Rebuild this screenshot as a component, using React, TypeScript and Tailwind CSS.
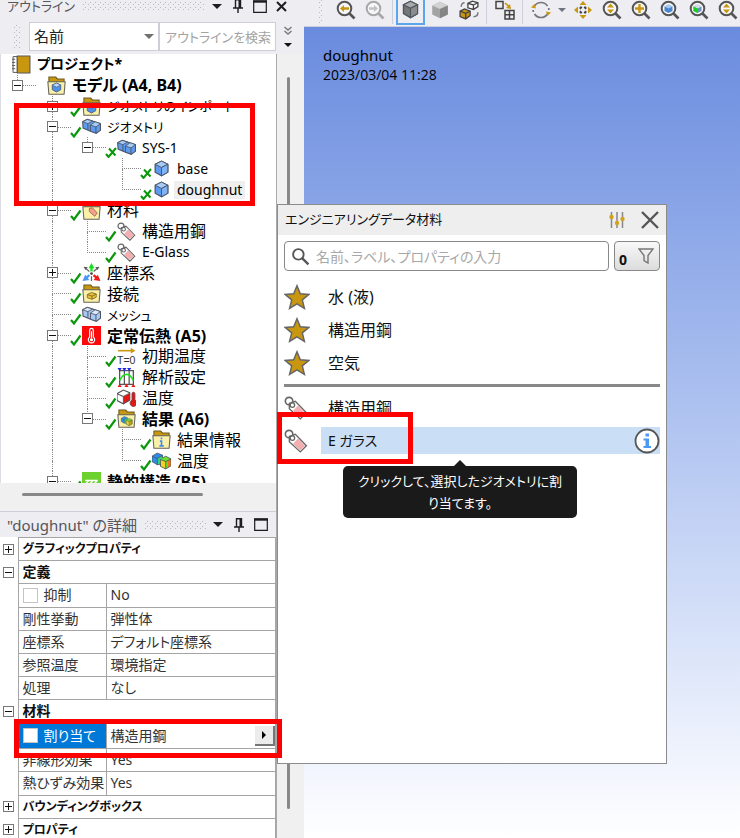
import React from 'react';
import clsx from 'clsx';

// guide cells in front of a tree row: one character for every level
//   ' ' empty   '|' line passing by   't' branch   'l' last branch
//   '-' open node   '+' closed node   '_' open node, last of its branch
interface TreeRow {
  guides: string
  icon: React.ReactNode
  label: string
  mark?: 'check' | 'cross'
  bold?: boolean
  script?: 'latin' | 'kana'
  selected?: boolean
}

interface DetailRow {
  name: string
  value?: string
  node?: '+' | '-'
  kana?: boolean
  checkbox?: boolean
  active?: boolean
}

const Svg: React.FC<{ size?: string, box?: string, children: React.ReactNode }> = ({ size = 'size-[19px]', box = '0 0 18 18', children }) => (
  <svg viewBox={box} className={clsx('shrink-0', size)} fill="none" aria-hidden="true">{children}</svg>
);

const BookIcon = () => (
  <Svg>
    <path d="M1 1.500h4v15H1z" fill="#fff" stroke="#555" strokeWidth=".9" />
    <path d="M5 1h12v16H5z" fill="#c8960f" stroke="#555" strokeWidth="1" />
    <path d="M0 4h3M0 7h3M0 10h3M0 13h3" stroke="#555" strokeWidth=".9" />
  </Svg>
);

const Folder: React.FC<{ children?: React.ReactNode }> = ({ children }) => (
  <Svg>
    <path d="M1.800 6V1h6.500l1.500 1.800h6.400V6z" fill="#c8960f" stroke="#6b5a24" strokeWidth="1" />
    <path d="M.8 5.500h16.400l-1 11.700H1.800z" fill="#fbf0a8" stroke="#66645a" strokeWidth="1" />
    {children}
  </Svg>
);

const SmallCube: React.FC<{ fill?: string }> = ({ fill = '#4f90e8' }) => (
  <>
    <path d="M9 6.600l4 2v4.400l-4 2.200-4-2.200V8.600z" fill={fill} stroke="#44597c" strokeWidth=".8" />
    <path d="M5 8.600l4 2 4-2-4-2z" fill="#b9d7fb" stroke="#44597c" strokeWidth=".6" />
  </>
);

const CubesIcon: React.FC<{ pale?: boolean }> = ({ pale }) => (
  <Svg>
    <path d="M.6 4.500L5 2.300l5 1.500 7.500 2.500v6.200l-4 3-5.500-2-7-3z" fill={pale ? '#a9c9f5' : '#5c9bf0'} stroke="#4c5564" strokeWidth="1" />
    <path d="M.6 4.500l5 1.800L10 3.800 5 2.300z" fill={pale ? '#dbe8fb' : '#a8ccf8'} stroke="#4c5564" strokeWidth=".8" />
    <path d="M8 7.600l5.200 1.800 4.300-3.100-5-1.800z" fill={pale ? '#dbe8fb' : '#a8ccf8'} stroke="#4c5564" strokeWidth=".8" />
    <path d="M5.600 6.300v6M8 7.600v5.800M13.200 9.400v6" stroke="#4c5564" strokeWidth=".9" />
  </Svg>
);

const CubeIcon: React.FC<{ fill?: string, top?: string, side?: string, size?: string }> = ({ fill = '#5c9bf0', top = '#a8ccf8', side = '#7fb3f6', size }) => (
  <Svg size={size}>
    <path d="M3 5l6-3 6 3v7.500L9 16l-6-3.500z" fill={fill} stroke="#4c5564" strokeWidth="1.200" />
    <path d="M3 5l6-3 6 3-6 3z" fill={top} stroke="#4c5564" strokeWidth=".9" />
    <path d="M9 8l6-3v7.500L9 16z" fill={side} stroke="#4c5564" strokeWidth=".9" />
  </Svg>
);

const TagIcon: React.FC<{ size?: string }> = ({ size }) => (
  <Svg size={size}>
    <path d="M4 5.500L8.500 4l8.300 8.500-4.600 4.700L4 9.500z" fill="#fff" stroke="#666" strokeWidth="1" />
    <path d="M10.500 7.200l5.200 5.300-3.600 3.600-5.300-5z" fill="#f4aeb0" />
    <circle cx="3.800" cy="3.800" r="2.800" stroke="#666" strokeWidth="1.200" />
    <circle cx="6.300" cy="6.800" r="1.700" fill="#fff" stroke="#666" strokeWidth="1" />
  </Svg>
);

const AxesIcon = () => (
  <Svg>
    <path d="M9 8V4" stroke="#19e019" strokeWidth="2.200" />
    <path d="M9 0l2.800 5H6.200z" fill="#19e019" />
    <path d="M11 11.500l3 2.500" stroke="#f01818" strokeWidth="2.200" />
    <path d="M17.500 17l-6.500-1 4-4.800z" fill="#f01818" />
    <path d="M7 11.500L4 14" stroke="#4c96f5" strokeWidth="2.200" />
    <path d="M.5 17l6.500-1-4-4.800z" fill="#4c96f5" />
    <path d="M7 8L4 5.500M11 8l3-2.500M9 12.500V17" stroke="#666" strokeWidth="1.200" />
    <path d="M1.500 3.500l4 .6-2.200 2.500zM16.500 3.500l-4 .6 2.200 2.500z" fill="#555" />
    <circle cx="9" cy="10" r="1.300" fill="#444" />
  </Svg>
);

const ThermalIcon = () => (
  <Svg>
    <path d="M0 0h18v18H0z" fill="#fa0a0a" />
    <path d="M7.300 10.500V4a1.700 1.700 0 013.400 0v6.500a3 3 0 11-3.400 0z" stroke="#fff" strokeWidth="1.100" />
    <path d="M9 5v7" stroke="#fff" strokeWidth="1" />
    <circle cx="9" cy="13" r="1.500" fill="#fff" />
  </Svg>
);

const InitialTempIcon = () => (
  <Svg>
    <path d="M1 3.500h13" stroke="#c8960f" strokeWidth="1.500" />
    <path d="M13 .8l4.500 2.700L13 6.200z" fill="#c8960f" />
    <text x="0" y="16.500" fontSize="10" fontFamily="Liberation Sans, sans-serif" fill="#333">T=0</text>
  </Svg>
);

const AnalysisIcon = () => (
  <Svg>
    <path d="M2.500 2.500h13v13h-13zM7 2.500v13M11.500 2.500v13" stroke="#555" strokeWidth="1.200" />
    <path d="M2.500 12C6 4 12 4 15.500 12" stroke="#1fe01f" strokeWidth="1.500" />
    <path d="M.5 0h4l-2 3zM5 0h4L7 3zM9.500 0h4l-2 3z" fill="#2222e8" />
    <path d="M.5 18h4l-2-3zM7 18h4l-2-3zM13.500 18h4l-2-3z" fill="#f01818" />
  </Svg>
);

const TemperatureIcon = () => (
  <Svg>
    <path d="M0 4.500L6 1l6 2.500v7L6 14l-6-3z" fill="#fff" stroke="#555" strokeWidth="1.100" />
    <path d="M6 7l6-3v6.500L6 14z" fill="#e01818" stroke="#555" strokeWidth=".8" />
    <path d="M0 4.500L6 7" stroke="#555" />
    <path d="M14.200 10.500V4.500a1.400 1.400 0 012.800 0v6a3.200 3.200 0 11-2.800 0z" fill="#e01818" stroke="#804040" strokeWidth=".8" />
  </Svg>
);

const Rainbow = () => (
  <>
    <path d="M0 5l5-3 5 2v7l-5 2-5-3z" fill="#2d8df0" />
    <path d="M5 7l5-3v7l-5 2z" fill="#28d878" />
    <path d="M8 8l5-3 5 2.500V14l-5 3-5-2.500z" fill="#6be02b" />
    <path d="M8 8l5 2v7l-5-2.500z" fill="#f2d420" />
    <path d="M15 9l3-1.500V14l-3 1.800z" fill="#f07818" />
    <path d="M0 5l5-3 5 2v2.500L13 5l5 2.500V14l-5 3-5-2.500v-2L5 13l-5-3zM0 5l5 2 5-3M5 7v6M8 8l5 2 5-2.500M13 10v7M8 8v6" stroke="#4c5564" strokeWidth=".8" />
  </>
);

const StructuralIcon = () => (
  <Svg>
    <path d="M0 0h18v18H0z" fill="#6ed22e" />
    <path d="M3 8h12M3 12l3-3.500M7 12l3-3.500M11 12l3-3.500" stroke="#fff" strokeWidth="1.300" />
  </Svg>
);

const Mark: React.FC<{ kind?: 'check' | 'cross' }> = ({ kind }) => (
  <svg viewBox="0 0 12 12" className="mt-[9px] size-[12px] shrink-0" fill="none" aria-hidden="true">
    {kind === 'check' && <path d="M1 7l3 3.500L10.500 1.500" stroke="#0b970b" strokeWidth="2.200" />}
    {kind === 'cross' && <path d="M1 8l2.500 3L11 2M4 2.500l6.500 7" stroke="#0b970b" strokeWidth="2" />}
  </svg>
);

const Expander: React.FC<{ open: boolean, className?: string }> = ({ open, className }) => (
  <button type="button" aria-label={open ? 'collapse' : 'expand'} className={clsx('flex size-[11px] items-center justify-center border border-[#777] bg-white', className)}>
    <svg viewBox="0 0 7 7" className="size-[7px] shrink-0" stroke="#111" strokeWidth="1">
      <path d={open ? 'M0 3.500h7' : 'M0 3.500h7M3.500 0v7'} />
    </svg>
  </button>
);

const Guide: React.FC<{ kind: string }> = ({ kind }) => {
  const above = '|tl-+_'.includes(kind)
  const below = '|t-+'.includes(kind)
  const branch = 'tl-+_'.includes(kind)
  return (
    <span className="relative flex w-[35px] shrink-0 self-stretch pl-[16px]">
      <span className="flex flex-1 flex-col">
        <span className={clsx('flex-1 border-dotted border-[#888]', above && 'border-l', branch && 'border-b')} />
        <span className={clsx('flex-1 border-dotted border-[#888]', below && 'border-l')} />
      </span>
      {'-+_'.includes(kind) && (
        <span className="absolute inset-y-0 left-[11px] flex items-center"><Expander open={kind !== '+'} /></span>
      )}
    </span>
  );
};

const tree: TreeRow[] = [
  { guides: '', icon: <BookIcon />, label: 'プロジェクト*', bold: true, script: 'kana' },
  { guides: '_', icon: <Folder><SmallCube /></Folder>, label: 'モデル (A4, B4)', bold: true },
  { guides: ' +', icon: <Folder><SmallCube /></Folder>, label: 'ジオメトリのインポート', mark: 'check', script: 'kana' },
  { guides: ' -', icon: <CubesIcon />, label: 'ジオメトリ', mark: 'check', script: 'kana' },
  { guides: ' |_', icon: <CubesIcon />, label: 'SYS-1', mark: 'cross', script: 'latin' },
  { guides: ' | t', icon: <CubeIcon />, label: 'base', mark: 'cross', script: 'latin' },
  { guides: ' | l', icon: <CubeIcon />, label: 'doughnut', mark: 'cross', script: 'latin', selected: true },
  { guides: ' -', icon: <Folder><path d="M7 7l3-.5 4.500 5-2.500 3L7 10z" fill="#f3a08c" stroke="#8a6a50" strokeWidth=".8" /></Folder>, label: '材料', mark: 'check' },
  { guides: ' |t', icon: <TagIcon />, label: '構造用鋼', mark: 'check' },
  { guides: ' |l', icon: <TagIcon />, label: 'E-Glass', mark: 'check', script: 'latin' },
  { guides: ' +', icon: <AxesIcon />, label: '座標系', mark: 'check' },
  { guides: ' t', icon: <Folder><path d="M5 10l4-2 4.500 1.500v3L9.500 14.500 5 13zM5 10l4.500 1.500v3M9.500 11.500l4-2" fill="#e6c13c" stroke="#7d6624" strokeWidth=".8" /></Folder>, label: '接続', mark: 'check' },
  { guides: ' t', icon: <CubesIcon pale />, label: 'メッシュ', mark: 'check', script: 'kana' },
  { guides: ' -', icon: <ThermalIcon />, label: '定常伝熱 (A5)', mark: 'check', bold: true },
  { guides: ' |t', icon: <InitialTempIcon />, label: '初期温度', mark: 'check' },
  { guides: ' |t', icon: <AnalysisIcon />, label: '解析設定', mark: 'check' },
  { guides: ' |t', icon: <TemperatureIcon />, label: '温度', mark: 'check' },
  { guides: ' |_', icon: <Folder><g transform="translate(4 6) scale(.58)"><Rainbow /></g></Folder>, label: '結果 (A6)', mark: 'check', bold: true },
  { guides: ' | t', icon: <Folder><path d="M9 7v1.800M7.500 10.500H9v4.500M7 15h4.200" stroke="#3f8ff0" strokeWidth="1.500" /></Folder>, label: '結果情報', mark: 'check' },
  { guides: ' | l', icon: <Svg><Rainbow /></Svg>, label: '温度', mark: 'check' },
  { guides: ' -', icon: <StructuralIcon />, label: '静的構造 (B5)', mark: 'check', bold: true },
];

const details: DetailRow[] = [
  { name: 'グラフィックプロパティ', node: '+', kana: true },
  { name: '定義', node: '-' },
  { name: '抑制', value: 'No', checkbox: true },
  { name: '剛性挙動', value: '弾性体' },
  { name: '座標系', value: 'デフォルト座標系' },
  { name: '参照温度', value: '環境指定' },
  { name: '処理', value: 'なし' },
  { name: '材料', node: '-' },
  { name: '割り当て', value: '構造用鋼', checkbox: true, active: true },
  { name: '非線形効果', value: 'Yes' },
  { name: '熱ひずみ効果', value: 'Yes' },
  { name: 'バウンディングボックス', node: '+', kana: true },
  { name: 'プロパティ', node: '+', kana: true },
];

const Grip: React.FC<{ className?: string }> = ({ className }) => (
  <span className={clsx('bg-[radial-gradient(#b8b8be_0.8px,transparent_1px),radial-gradient(#b8b8be_0.8px,transparent_1px)] bg-[length:5px_5px] bg-[position:0_0,2px_3px]', className)} />
);

const PanelTitle: React.FC<{ title: string, closable?: boolean, className: string }> = ({ title, closable, className }) => (
  <header className={clsx('flex items-center pl-[7px] text-[#55555a]', className)}>
    <h2 className="mr-[6px] shrink-0">{title}</h2>
    <Grip className="h-[8px] flex-1" />
    <div className="flex shrink-0 items-center text-[#1c1c22]">
      <button type="button" aria-label="menu" className="flex w-[24px] justify-center">
        <svg viewBox="0 0 10 5" className="h-[5px] w-[10px]" fill="currentColor"><path d="M0 0h10L5 5z" /></svg>
      </button>
      <button type="button" aria-label="pin" className="flex w-[18px] justify-center">
        <svg viewBox="0 0 10 14" className="h-[14px] w-[10px]" fill="none" stroke="currentColor">
          <path d="M2.500 8.500V.7h5v7.800M0 9h10M5 9v5" strokeWidth="1.400" /><path d="M6.500 1v8" strokeWidth="2" />
        </svg>
      </button>
      <button type="button" aria-label="maximize" className="flex w-[25px] justify-center">
        <svg viewBox="0 0 14 13" className="h-[13px] w-[14px]" fill="none" stroke="currentColor">
          <path d="M.7 1h12.600v11.300H.7z" strokeWidth="1.200" /><path d="M0 1.500h14" strokeWidth="2.400" />
        </svg>
      </button>
      {closable && (
        <button type="button" aria-label="close" className="flex w-[18px] justify-center">
          <svg viewBox="0 0 11 11" className="size-[11px]" fill="none" stroke="currentColor" strokeWidth="2"><path d="M1 1l9 9M10 1l-9 9" /></svg>
        </button>
      )}
    </div>
  </header>
);

const OutlineTree = () => (
  <div className="h-[429px] overflow-hidden border-l border-[#dcdce4] bg-white">
    <ul className="grid h-[438px] auto-rows-fr" role="tree">
      {tree.map((row, i) => (
        <li key={i} role="treeitem" aria-selected={!!row.selected} className="flex min-h-0 items-center">
          {row.guides.split('').map((kind, n) => <Guide key={n} kind={kind} />)}
          <span className="flex w-[11px] shrink-0 justify-end"><Mark kind={row.mark} /></span>
          {row.icon}
          <span className={clsx(
            'ml-[3px] px-[3px] leading-[18px] whitespace-nowrap text-black',
            row.script === 'kana' && !row.bold && 'text-[13px]',
            (row.script === 'latin' || (row.script === 'kana' && row.bold)) && 'text-[14px]',
            !row.script && 'text-[16px]',
            row.bold && 'font-bold',
            row.selected && 'bg-[#efefef]',
          )}>{row.label}</span>
        </li>
      ))}
    </ul>
  </div>
);

const DetailsTable = () => (
  <table className="h-[305px] w-full table-fixed border-collapse bg-white text-[14px] leading-[18px] text-[#333]">
    <colgroup>
      <col className="w-[18px]" />
      <col className="w-[88px]" />
      <col />
    </colgroup>
    <tbody>
      {details.map((row) => (
        <tr key={row.name}>
          <td className="p-0 pl-[3px]">{row.node && <Expander open={row.node === '-'} />}</td>
          {row.node ? (
            <th colSpan={2} className={clsx('border border-[#a5a5a5] p-0 pl-[4px] text-left font-bold text-[#111]', row.kana && 'text-[12px]')}>{row.name}</th>
          ) : (
            <>
              <td className={clsx('border border-[#a5a5a5] p-0 pl-[4px] whitespace-nowrap', row.active && 'bg-[#0078d7] text-white')}>
                {row.checkbox ? (
                  <label className="flex items-center gap-[6px]">
                    <input type="checkbox" className="size-[15px] appearance-none border border-[#c4c4c4] bg-white" />
                    {row.name}
                  </label>
                ) : row.name}
              </td>
              <td className="border border-[#a5a5a5] p-0 pl-[4px]">
                <div className="flex items-center justify-between">
                  {row.value}
                  {row.active && (
                    <button type="button" aria-label="assign" className="flex h-[20px] w-[20px] items-center justify-center border-r-2 border-b-2 border-[#777] bg-[#ececec]">
                      <svg viewBox="0 0 4 8" className="h-[8px] w-[4px]" fill="#000"><path d="M0 0l4 4-4 4z" /></svg>
                    </button>
                  )}
                </div>
              </td>
            </>
          )}
        </tr>
      ))}
    </tbody>
  </table>
);

const Zoomer: React.FC<{ color?: string, children?: React.ReactNode }> = ({ color = '#555', children }) => (
  <Svg size="size-[20px]" box="0 0 20 20">
    <circle cx="8.500" cy="8.500" r="6.800" fill="#f6f6f8" stroke={color} strokeWidth="2" />
    <path d="M13.500 13.500l5 5" stroke={color} strokeWidth="2.600" />
    {children}
  </Svg>
);

const ToolButton: React.FC<{ name: string, active?: boolean, children: React.ReactNode }> = ({ name, active, children }) => (
  <button type="button" aria-label={name} className={clsx('flex h-[25px] w-[29px] shrink-0 items-center justify-center pb-[5px]', active && 'border-2 border-t-0 border-[#5aa5ee]')}>
    {children}
  </button>
);

const Separator = () => <span className="mx-[3px] h-[24px] w-px shrink-0 bg-[#cccedb]" />;

const UpDown = () => <path d="M8.500 3.500L12 7.500H5zM8.500 13.500L12 9.500H5z" fill="#c8960f" />;

const Toolbar = () => (
  <div className="flex h-[27px] items-start overflow-hidden border-b border-[#cccedb] bg-[#eeeef2] pl-[13px]">
    <Grip className="mr-[8px] h-[23px] w-[6px] shrink-0" />
    <ToolButton name="previous view"><Zoomer><path d="M4 8.500l4-3.500v2.300h5v2.400H8V12z" fill="#c8960f" /></Zoomer></ToolButton>
    <ToolButton name="next view"><Zoomer color="#a8a8a8"><path d="M13 8.500L9 5v2.300H4v2.400h5V12z" fill="#c2c2c2" /></Zoomer></ToolButton>
    <Separator />
    <ToolButton name="edges" active><CubeIcon size="size-[21px]" fill="#777" top="#aaa" side="#8c8c8c" /></ToolButton>
    <ToolButton name="shaded">
      <Svg size="size-[20px]"><path d="M2 5l7-3.500L16 5v8l-7 3.500L2 13z" fill="#a4a4a4" /><path d="M2 5l7-3.500L16 5 9 8z" fill="#d2d2d2" /><path d="M9 8l7-3v8l-7 3.500z" fill="#858585" /></Svg>
    </ToolButton>
    <ToolButton name="switch view">
      <Svg size="size-[20px]">
        <path d="M8 3l4-2 5 1.500V6l-4 2.500L8 7zM8 3l5 1.500L17 2.500M13 4.500v4" fill="#fff" stroke="#444" strokeWidth="1.200" />
        <path d="M1 10l4-2 5 2v4l-4 3-5-2z" fill="#c8960f" stroke="#444" strokeWidth="1.200" />
        <path d="M1 10l5 2 4-2M6 12v5" stroke="#444" strokeWidth="1.200" />
        <path d="M2 6c0-2 1-3.500 3-3.500M17 11c0 3-1 4-4 4" stroke="#777" strokeWidth="1.300" />
      </Svg>
    </ToolButton>
    <Separator />
    <ToolButton name="layout">
      <Svg size="size-[20px]" box="0 0 20 20">
        <path d="M1 1.500h7v7H1z" stroke="#444" strokeWidth="1.500" />
        <path d="M10 10.500h9v8.500h-9zM14.500 10.500V19M10 14.800h9" stroke="#444" strokeWidth="1.500" />
        <path d="M10 3l4.500 4" stroke="#c8960f" strokeWidth="1.600" /><path d="M16 9l-5-1 4-4z" fill="#c8960f" />
      </Svg>
    </ToolButton>
    <Separator />
    <ToolButton name="rotate">
      <Svg size="size-[20px]" box="0 0 20 20">
        <path d="M3.500 6a7.800 7.800 0 0113 0M16.500 14a7.800 7.800 0 01-13 0M2.200 10v2M17.800 8v2" stroke="#777" strokeWidth="1.700" />
        <path d="M0 7.500L3.500 4 5 8.500zM20 12.500L16.500 16 15 11.500z" fill="#c8960f" />
      </Svg>
    </ToolButton>
    <button type="button" aria-label="rotate options" className="flex h-[20px] w-[13px] shrink-0 items-center justify-center">
      <svg viewBox="0 0 8 4" className="h-[4px] w-[8px]" fill="#6f7480"><path d="M0 0h8L4 4z" /></svg>
    </button>
    <ToolButton name="pan">
      <Svg size="size-[20px]" box="0 0 20 20">
        <path d="M10 1l3.500 4h-7zM10 19l3.500-4h-7zM1 10l4-3.500v7zM19 10l-4-3.500v7z" fill="#c8960f" />
        <path d="M7 7l1.500 1.500M13 7l-1.500 1.500M7 13l1.500-1.500M13 13l-1.500-1.500" stroke="#444" strokeWidth="2.600" />
      </Svg>
    </ToolButton>
    <ToolButton name="zoom"><Zoomer><UpDown /></Zoomer></ToolButton>
    <ToolButton name="zoom in"><Zoomer><path d="M8.500 4v9M4 8.500h9" stroke="#c8960f" strokeWidth="2.400" /></Zoomer></ToolButton>
    <ToolButton name="fit"><Zoomer><path d="M4.500 6.500l4-2 4 2v4.500l-4 2-4-2z" fill="#4a86d0" /><path d="M4.500 6.500l4-2 4 2-4 2z" fill="#a9cbf0" /></Zoomer></ToolButton>
    <ToolButton name="zoom selection"><Zoomer><path d="M4.500 6.500l4-2 4 2v4.500l-4 2-4-2z" fill="#6b8fc0" /><path d="M4.500 6.500l4-2 4 2-4 2z" fill="#d5dde8" /><path d="M4.500 6.500l4 2V13l-4-2z" fill="#19d419" /></Zoomer></ToolButton>
    <ToolButton name="zoom box"><Zoomer><UpDown /></Zoomer></ToolButton>
  </div>
);

const Star = () => (
  <Svg size="size-[26px]" box="0 0 26 26">
    <path d="M13 1.800l3.300 8 8.700.6-6.700 5.500 2.100 8.400L13 19.800l-7.400 4.500 2.100-8.400L1 10.400l8.700-.6z" fill="#c8960f" stroke="#666" strokeWidth="1.500" />
  </Svg>
);

const MaterialRow: React.FC<{ label: string, favourite?: boolean, hovered?: boolean }> = ({ label, favourite, hovered }) => (
  <li className="flex h-[33px] items-center">
    <span className="w-[37px] shrink-0">{favourite ? <Star /> : <TagIcon size="size-[24px]" />}</span>
    <span className={clsx('flex h-[27px] flex-1 items-center justify-between pl-[7px]', hovered ? 'bg-[#cadef5] text-[14px]' : 'text-[16px]')}>
      {label}
      {hovered && (
        <button type="button" aria-label="info">
          <Svg size="size-[26px]" box="0 0 26 26">
            <circle cx="13" cy="13" r="11.500" fill="#fff" stroke="#555" strokeWidth="1.800" />
            <path d="M11.500 5.500h3.500v3h-3.500zM9.500 10.500H15v7.500h2v2H9.500v-2h2v-5.500h-2z" fill="#4a9af5" />
          </Svg>
        </button>
      )}
    </span>
  </li>
);

const MaterialPopup = () => (
  <section className="absolute top-[204px] left-[277px] h-[560px] w-[390px] border border-[#8c8c8c] bg-white text-[#111]">
    <header className="flex h-[30px] items-center bg-[#eeeeef] pr-[7px] pl-[7px]">
      <h2 className="flex-1 text-[13px]">エンジニアリングデータ材料</h2>
      <button type="button" aria-label="settings" className="mr-[16px]">
        <Svg size="size-[16px]" box="0 0 16 16">
          <path d="M2.500 0v16M8 0v16M13.500 0v16" stroke="#888" strokeWidth="1.500" />
          <circle cx="2.500" cy="5" r="2.200" fill="#d3a21c" /><circle cx="8" cy="11" r="2.200" fill="#d3a21c" /><circle cx="13.500" cy="7" r="2.200" fill="#d3a21c" />
        </Svg>
      </button>
      <button type="button" aria-label="close">
        <Svg size="size-[18px]"><path d="M1 1l16 16M17 1L1 17" stroke="#555" strokeWidth="2.400" /></Svg>
      </button>
    </header>
    <div className="mt-[6px] flex h-[30px] gap-[5px] px-[6px]">
      <label className="flex flex-1 items-center rounded-[4px] border border-[#888] pl-[6px]">
        <Svg><circle cx="7" cy="7" r="5" stroke="#555" strokeWidth="1.800" /><path d="M10.500 10.500l6 6" stroke="#555" strokeWidth="2.200" /></Svg>
        <input type="text" aria-label="search" placeholder="名前、ラベル、プロパティの入力" className="min-w-0 flex-1 pl-[6px] text-[14px] outline-none placeholder:text-[#a8a8a8]" />
      </label>
      <button type="button" className="flex w-[46px] items-center rounded-[4px] border border-[#888] bg-linear-to-b from-[#f8f8f8] to-[#dcdcdc] pl-[4px]">
        <span className="w-[19px] self-end text-left font-['Open_Sans'] text-[14px] leading-[20px] font-bold">0</span>
        <Svg size="size-[16px]" box="0 0 16 16"><path d="M1 1h14L10 7.500V15l-4-2.500v-5z" stroke="#777" strokeWidth="1.400" /></Svg>
      </button>
    </div>
    <ul className="mt-[9px] px-[6px]">
      <MaterialRow label="水 (液)" favourite />
      <MaterialRow label="構造用鋼" favourite />
      <MaterialRow label="空気" favourite />
    </ul>
    <hr className="mx-[6px] mt-[5px] h-[3px] border-0 bg-[#888]" />
    <ul className="mt-[4px] px-[6px]">
      <MaterialRow label="構造用鋼" />
      <MaterialRow label="E ガラス" hovered />
    </ul>
    <div role="tooltip" className="absolute top-[255px] left-[65px] flex w-[234px] flex-col items-center">
      <svg viewBox="0 0 12 6" className="h-[6px] w-[12px]" fill="#1a1a1a"><path d="M0 6l6-6 6 6z" /></svg>
      <p className="w-full rounded-[5px] bg-[#1a1a1a] px-[8px] py-[4px] text-center text-[13px] leading-[22px] whitespace-nowrap text-white">
        クリックして、選択したジオメトリに割<br />り当てます。
      </p>
    </div>
  </section>
);

const App: React.FC = () => {
  return (
    <div className="relative flex h-screen overflow-hidden bg-[#eeeef2] font-['Noto_Sans','Noto_Sans_CJK_JP',sans-serif] text-[#222] [font-feature-settings:'palt']">
      <aside className="flex w-[304px] shrink-0 flex-col">
        <PanelTitle title="アウトライン" closable className="h-[12px] pr-[14px] text-[13px] leading-[12px]" />
        <div className="flex items-center pt-[10px] pb-[3px] pl-[12px]">
          <Grip className="mr-[8px] h-[23px] w-[9px]" />
          <div className="relative w-[130px]">
            <select aria-label="filter" className="h-[29px] w-full appearance-none border border-[#cccedb] bg-white pl-[4px] text-[15px]">
              <option>名前</option>
            </select>
            <svg viewBox="0 0 10 5" className="pointer-events-none absolute top-[12px] right-[5px] h-[5px] w-[10px]" fill="#717171"><path d="M0 0h10L5 5z" /></svg>
          </div>
          <input type="text" aria-label="search outline" placeholder="アウトラインを検索" className="h-[29px] w-[117px] border border-[#cccedb] bg-white pl-[5px] text-[13px] placeholder:text-[#a3a3a3]" />
          <button type="button" aria-label="more" className="flex w-[24px] justify-center">
            <svg viewBox="0 0 8 22" className="h-[22px] w-[8px]" fill="none">
              <path d="M.5 1L4 4l3.500-3M.5 5L4 8l3.500-3" stroke="#777" strokeWidth="1.400" />
              <path d="M0 17h8l-4 4z" fill="#111" />
            </svg>
          </button>
        </div>
        <div className="flex min-h-0 flex-1">
          <div className="w-[276px] shrink-0">
            <OutlineTree />
            <div className="flex h-[28px] bg-[#f0f0f0] pt-[10px] pl-[22px]">
              <span className="h-[3px] w-[181px] rounded-full bg-[#888]" />
            </div>
            <PanelTitle title={'"doughnut" の詳細'} className="h-[26px] border-t border-[#cccedb] pr-[3px] text-[15px] leading-[20px]" />
            <DetailsTable />
          </div>
          <div className="flex flex-1 justify-center border-l border-[#aaa] bg-[#f0f0f0] pt-[23px] pr-[5px] pb-[29px]">
            <span className="w-[3px] rounded-full bg-[#888]" />
          </div>
        </div>
      </aside>
      <main className="flex min-w-0 flex-1 flex-col">
        <Toolbar />
        <div className="flex-1 bg-linear-to-b from-[#6a8bde] to-white pt-[19px] pl-[19px] text-[15px] leading-[19px] text-black">
          <p>doughnut</p>
          <p className="font-['Open_Sans'] text-[14px]">2023/03/04 11:28</p>
        </div>
      </main>

      <MaterialPopup />

      {/* call-out frames */}
      <div className="pointer-events-none absolute top-[103px] left-[14px] h-[103px] w-[241px] border-5 border-[#f00]" />
      <div className="pointer-events-none absolute top-[412px] left-[277px] h-[52px] w-[136px] border-5 border-[#f00]" />
      <div className="pointer-events-none absolute top-[719px] left-[14px] h-[39px] w-[268px] border-5 border-[#f00]" />
    </div>
  );
};

export default App;
